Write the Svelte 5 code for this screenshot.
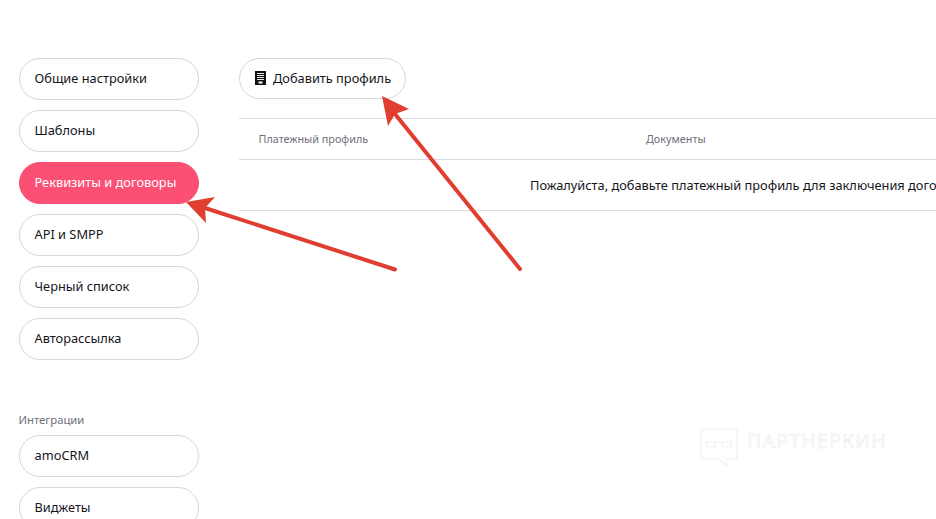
<script>
  const mainMenu = ['Общие настройки', 'Шаблоны', 'Реквизиты и договоры', 'API и SMPP', 'Черный список', 'Авторассылка'];
  const integrations = ['amoCRM', 'Виджеты'];
</script>

<div class="page">
  <aside class="sidebar">
    <nav class="menu">
      {#each mainMenu as item}
        <button class="pill" class:active={item === 'Реквизиты и договоры'}>{item}</button>
      {/each}
    </nav>
    <div class="menu-title">Интеграции</div>
    <nav class="menu">
      {#each integrations as item}
        <button class="pill">{item}</button>
      {/each}
    </nav>
  </aside>

  <main class="content">
    <button class="add-btn">
      <svg width="11" height="14" viewBox="0 0 11 14">
        <rect width="11" height="14" fill="#111"/>
        <path d="M2 2.5h7M2 4.5h7M2 6.5h7M2 8.5h7" stroke="#fff" stroke-width="0.9"/>
        <rect x="3.5" y="10.5" width="4" height="2" fill="#fff"/>
      </svg>
      Добавить профиль
    </button>

    <div class="table">
      <div class="thead">
        <span class="th-profile">Платежный профиль</span>
        <span>Документы</span>
      </div>
      <div class="empty">Пожалуйста, добавьте платежный профиль для заключения договора</div>
    </div>
  </main>

  <div class="watermark">
    <svg width="38" height="40" viewBox="0 0 38 40" fill="none" stroke="#f1f1f3" stroke-width="1.2">
      <path d="M3 1h32a2 2 0 0 1 2 2v26a2 2 0 0 1-2 2h-9v7l-7-7H3a2 2 0 0 1-2-2V3a2 2 0 0 1 2-2z"/>
      <path d="M6 14h26M6 14v5h9v-4M22 15v4h9v-5"/>
    </svg>
    <span>ПАРТНЕРКИН</span>
  </div>

  <svg class="arrows" width="936" height="519" viewBox="0 0 936 519">
    <path d="M395 269.5L205 208" stroke="#e03e30" stroke-width="4" stroke-linecap="round"/>
    <polygon points="186,202 215,197 205,208 206,223" fill="#e03e30"/>
    <path d="M520 269L395 114" stroke="#e03e30" stroke-width="4" stroke-linecap="round"/>
    <polygon points="382,96 409,109 395,114 388,126" fill="#e03e30"/>
  </svg>
</div>

<style>
  :global(body) {
    background: #fff;
    overflow: hidden;
  }

  .page {
    position: relative;
    display: flex;
    gap: 40px;
    width: 936px;
    height: 519px;
    padding: 58px 0 0 19px;
    box-sizing: border-box;
    overflow: hidden;
    font-family: "Noto Sans", sans-serif;
    color: #15151c;
  }

  .sidebar {
    flex: 0 0 180px;
  }

  .menu {
    display: flex;
    flex-direction: column;
    gap: 10px;
  }

  .menu-title {
    margin: 53px 0 8px -0.5px;
    font-size: 11.3px;
    line-height: 14px;
    color: #6f6f7b;
  }

  .pill {
    height: 42px;
    padding: 0 14.5px 2px;
    background: #fff;
    border: 1px solid #d6d6dc;
    border-radius: 21px;
    text-align: left;
    font: inherit;
    font-size: 12.8px;
    color: inherit;
  }

  .pill.active {
    background: #fb4f74;
    border-color: #fb4f74;
    color: #fff;
  }

  .content {
    flex: 0 0 900px;
  }

  .add-btn {
    display: flex;
    align-items: center;
    gap: 7px;
    width: 167px;
    height: 41px;
    padding: 0 15px 1px;
    background: #fff;
    border: 1px solid #d6d6dc;
    border-radius: 21px;
    font: inherit;
    font-size: 12.8px;
    color: inherit;
    white-space: nowrap;
  }

  .add-btn svg {
    flex: none;
  }

  .table {
    margin-top: 19px;
    border-top: 1px solid #d9d9df;
  }

  .thead {
    display: flex;
    align-items: center;
    height: 41px;
    padding: 0 0 1px 19.5px;
    box-sizing: border-box;
    border-bottom: 1px solid #d9d9df;
    font-size: 10.8px;
    color: #6f6f7b;
  }

  .th-profile {
    width: 387.5px;
  }

  .empty {
    height: 50px;
    padding-left: 291px;
    border-bottom: 1px solid #d9d9df;
    line-height: 50px;
    font-size: 12.8px;
    white-space: nowrap;
  }

  .watermark {
    position: absolute;
    left: 700px;
    top: 428px;
    display: flex;
    gap: 9px;
  }

  .watermark span {
    font-size: 19.5px;
    line-height: 26px;
    letter-spacing: 1.2px;
    color: transparent;
    -webkit-text-stroke: 0.5px #e8e8eb;
  }

  .arrows {
    position: absolute;
    left: 0;
    top: 0;
    pointer-events: none;
  }
</style>
